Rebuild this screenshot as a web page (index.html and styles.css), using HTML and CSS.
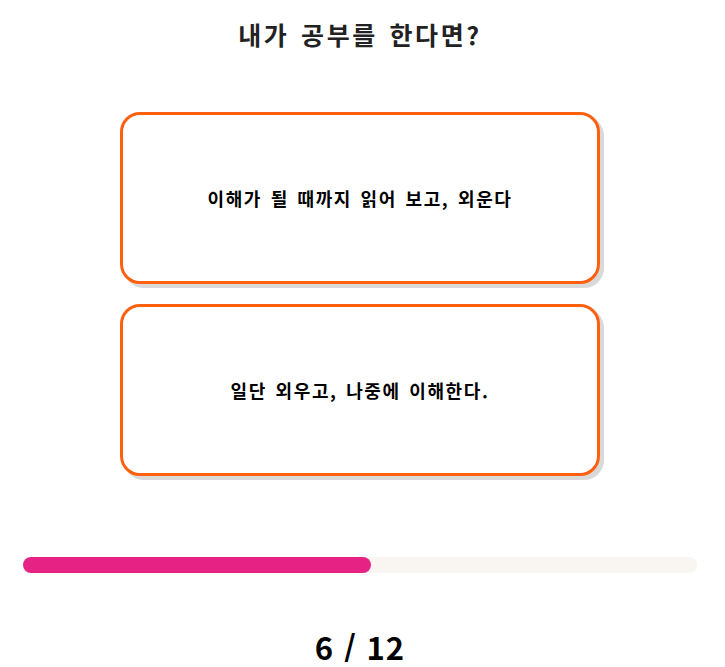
FILE: index.html
```html
<!DOCTYPE html>
<html lang="ko">
<head>
    <meta charset="UTF-8">
    <meta name="viewport" content="width=device-width, initial-scale=1.0">
    <title>공부 유형 테스트</title>
    <link rel="stylesheet" href="styles.css">
</head>
<body>
    <div class="page">
        <h1 class="question">내가 공부를 한다면?</h1>

        <div class="answers">
            <button class="answer" type="button">이해가 될 때까지 읽어 보고, 외운다</button>
            <button class="answer" type="button">일단 외우고, 나중에 이해한다.</button>
        </div>

        <div class="progress">
            <div class="progress-bar" style="width: 51.6%"></div>
        </div>

        <div class="counter">6 / 12</div>
    </div>
</body>
</html>
```

FILE: styles.css
```css
body {
    margin: 0;
    background-color: #fff;
    font-family: "Noto Sans CJK KR", "Noto Sans", sans-serif;
    color: #000;
}
.page {
    width: 720px;
}
.question {
    margin: 0;
    padding-top: 16px;
    line-height: 36px;
    font-size: 25px;
    font-weight: bold;
    letter-spacing: 2.6px;
    word-spacing: 2px;
    color: #222;
    text-align: center;
}
.answers {
    display: flex;
    flex-direction: column;
    align-items: center;
    gap: 20px;
    margin-top: 60px;
}
.answer {
    width: 480px;
    height: 172px;
    border: 3px solid #ff6010;
    border-radius: 20px;
    background-color: #fff;
    box-shadow: 4px 4px 0 #d9d9d9;
    font-family: inherit;
    font-size: 18px;
    font-weight: bold;
    letter-spacing: 1.6px;
    word-spacing: 2px;
    color: #000;
    cursor: pointer;
}
.progress {
    margin: 81px 23px 0;
    height: 16px;
    border-radius: 8px;
    background-color: #f9f6f2;
}
.progress-bar {
    height: 100%;
    border-radius: 8px;
    background-color: #e62385;
}
.counter {
    margin-top: 59px;
    line-height: 30px;
    font-size: 31px;
    font-weight: bold;
    letter-spacing: 1px;
    text-align: center;
}
```
